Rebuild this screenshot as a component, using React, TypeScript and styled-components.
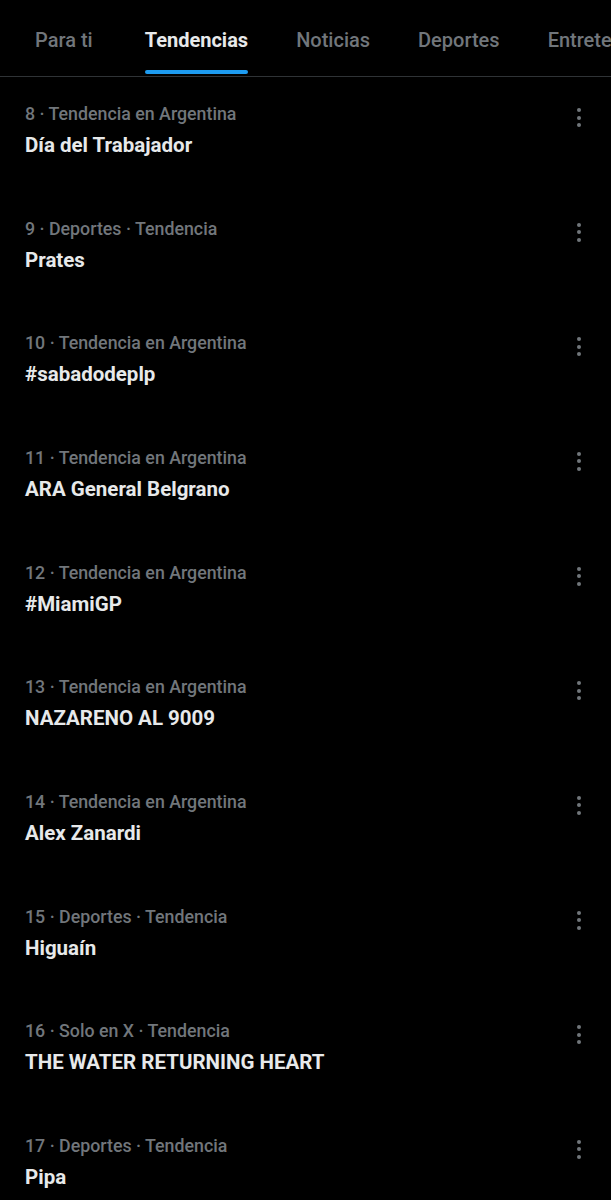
import React from "react";
import styled, { createGlobalStyle } from "styled-components";

const Global = createGlobalStyle`
  html, body { margin: 0; padding: 0; background: #000; }
  body { font-family: "Roboto", "Liberation Sans", sans-serif; -webkit-font-smoothing: antialiased; }
`;

const Page = styled.div`
  width: 611px;
  height: 1200px;
  background: #000;
  overflow: hidden;
`;

const TabBar = styled.nav`
  display: flex;
  height: 76px;
  border-bottom: 1px solid #2f3336;
  padding-left: 11px;
  white-space: nowrap;
  overflow: hidden;
`;

const Tab = styled.div<{ $active?: boolean }>`
  position: relative;
  flex-shrink: 0;
  display: flex;
  align-items: center;
  padding: 4px 24px 0;
  height: 100%;
  font-size: 20px;
  font-weight: ${(p) => (p.$active ? 700 : 500)};
  color: ${(p) => (p.$active ? "#e7e9ea" : "#71767b")};
  box-sizing: border-box;
  &:first-child {
    padding-right: 28px;
  }
`;

const Indicator = styled.span`
  position: absolute;
  left: 24px;
  right: 24px;
  bottom: 2px;
  height: 4px;
  border-radius: 2px;
  background: #1d9bf0;
`;

const List = styled.div`
  display: flex;
  flex-direction: column;
`;

const Item = styled.div`
  position: relative;
  height: 114.67px;
  padding: 26px 25px 0 25px;
  box-sizing: border-box;
`;

const Meta = styled.div`
  font-size: 17.8px;
  font-weight: 500;
  color: #71767b;
  line-height: 22px;
`;

const Title = styled.div`
  margin-top: 8px;
  font-size: 20.5px;
  font-weight: 700;
  color: #e7e9ea;
  line-height: 25px;
`;

const More = styled.div`
  position: absolute;
  top: 31px;
  right: 30px;
  display: flex;
  flex-direction: column;
  gap: 3.5px;
`;

const Dot = styled.span`
  width: 4px;
  height: 4px;
  border-radius: 50%;
  background: #71767b;
`;

const tabs = ["Para ti", "Tendencias", "Noticias", "Deportes", "Entrete"];

const trends = [
  { meta: "8 · Tendencia en Argentina", title: "Día del Trabajador" },
  { meta: "9 · Deportes · Tendencia", title: "Prates" },
  { meta: "10 · Tendencia en Argentina", title: "#sabadodeplp" },
  { meta: "11 · Tendencia en Argentina", title: "ARA General Belgrano" },
  { meta: "12 · Tendencia en Argentina", title: "#MiamiGP" },
  { meta: "13 · Tendencia en Argentina", title: "NAZARENO AL 9009" },
  { meta: "14 · Tendencia en Argentina", title: "Alex Zanardi" },
  { meta: "15 · Deportes · Tendencia", title: "Higuaín" },
  { meta: "16 · Solo en X · Tendencia", title: "THE WATER RETURNING HEART" },
  { meta: "17 · Deportes · Tendencia", title: "Pipa" },
];

export default function App() {
  return (
    <Page>
      <Global />
      <TabBar>
        {tabs.map((t) => (
          <Tab key={t} $active={t === "Tendencias"}>
            {t}
            {t === "Tendencias" && <Indicator />}
          </Tab>
        ))}
      </TabBar>
      <List>
        {trends.map((t) => (
          <Item key={t.meta}>
            <Meta>{t.meta}</Meta>
            <Title>{t.title}</Title>
            <More>
              <Dot />
              <Dot />
              <Dot />
            </More>
          </Item>
        ))}
      </List>
    </Page>
  );
}
